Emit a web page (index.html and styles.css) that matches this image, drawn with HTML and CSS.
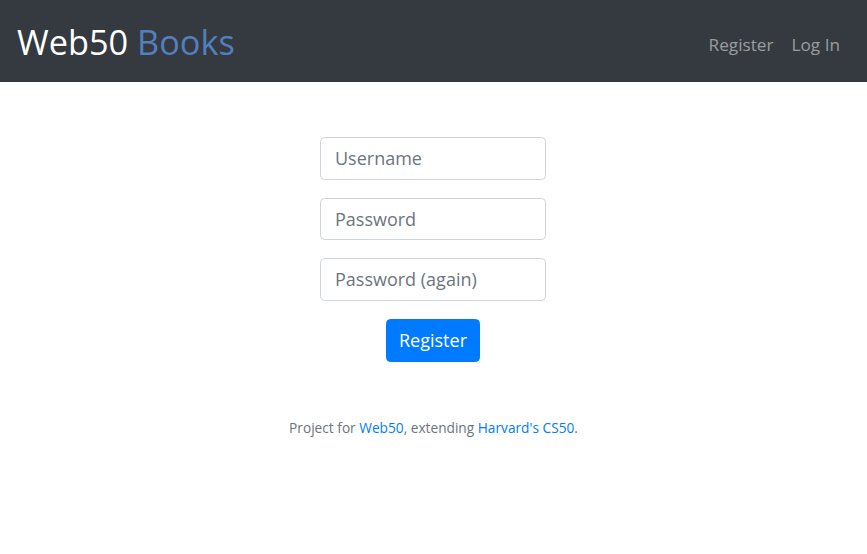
FILE: index.html
```html
<!DOCTYPE html>
<html lang="en">
<head>
<meta charset="utf-8">
<title>Web50 Books: Register</title>
<link rel="stylesheet" href="styles.css">
</head>
<body>
<nav class="navbar">
  <a class="brand" href="#"><span class="white">Web50</span> <span class="blue">Books</span></a>
  <ul class="nav">
    <li><a class="nav-link" href="#">Register</a></li>
    <li><a class="nav-link" href="#">Log In</a></li>
  </ul>
</nav>
<main class="main">
  <form class="form">
    <div class="group"><input class="control" type="text" placeholder="Username"></div>
    <div class="group"><input class="control" type="password" placeholder="Password"></div>
    <div class="group"><input class="control" type="password" placeholder="Password (again)"></div>
    <button class="btn" type="button">Register</button>
  </form>
</main>
<footer class="footer">
  Project for <a href="#">Web50</a>, extending <a href="#">Harvard's CS50</a>.
</footer>
</body>
</html>
```
FILE: styles.css
```css
html { font-size: 18px; }
* { box-sizing: border-box; }
body {
  margin: 0;
  font-family: "Segoe UI", "Open Sans", "Noto Sans", sans-serif;
  font-size: 18px;
  line-height: 1.5;
  color: #212529;
  background: #fff;
}
.navbar {
  display: flex;
  align-items: center;
  justify-content: space-between;
  height: 82px;
  padding: 0 18px 0 17px;
  background: #343a40;
}
.brand {
  font-size: 34.3px;
  text-decoration: none;
  line-height: 1;
  margin-top: 2px;
}
.white { color: #fff; }
.blue { color: #537fbe; }
.nav {
  display: flex;
  list-style: none;
  margin: 8px 0 0;
  padding: 0;
}
.nav-link {
  display: block;
  padding: 9px;
  font-size: 17.2px;
  color: rgba(255,255,255,.5);
  text-decoration: none;
}
.main {
  padding: 55px 55px 54px 54px;
  text-align: center;
}
.form { display: flex; flex-direction: column; align-items: center; }
.group { margin-bottom: 18px; }
.control {
  display: block;
  width: 226px;
  height: 42.5px;
  padding: 6px 14px;
  font: inherit;
  color: #495057;
  background: #fff;
  border: 1px solid #ced4da;
  border-radius: 4.5px;
}
.control::placeholder { color: #6c757d; opacity: 1; }
.btn {
  width: 94px;
  height: 43px;
  padding: 0;
  font: inherit;
  color: #fff;
  background: #007bff;
  border: 1px solid #007bff;
  border-radius: 4.5px;
}
.footer {
  text-align: center;
  font-size: 13.7px;
  color: #6c757d;
  margin-top: 2px;
}
.footer a { color: #007bff; text-decoration: none; }
```
